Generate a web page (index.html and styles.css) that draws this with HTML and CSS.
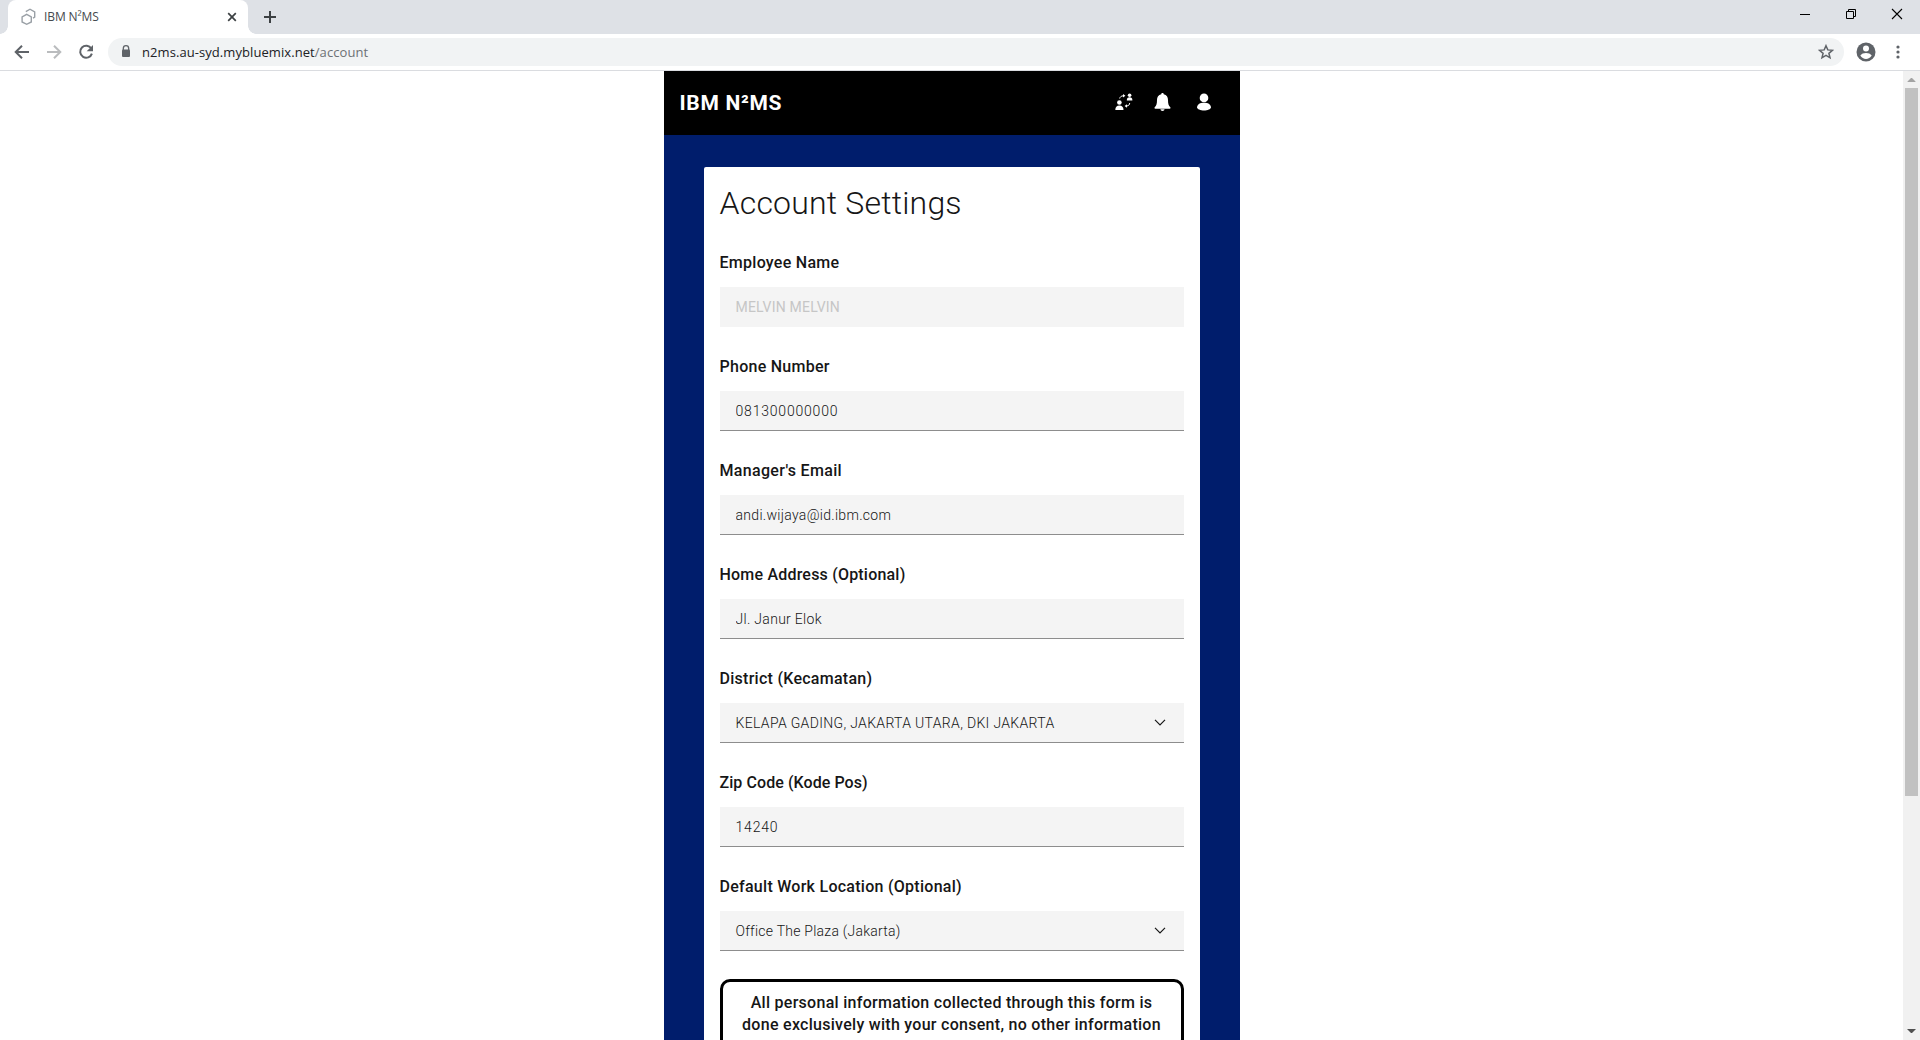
FILE: index.html
```html
<!DOCTYPE html>
<html lang="en">
<head>
<meta charset="utf-8">
<title>IBM N²MS</title>
<link rel="stylesheet" href="styles.css">
</head>
<body>
<div class="tabstrip">
  <div class="tab">
    <svg class="tab-icon" width="16" height="18" viewBox="0 0 16 18" fill="none" stroke="#9aa0a6" stroke-width="1.4"><path d="M5.7 6.3l4.6 2.7v5L5.7 16.3 1.1 14V9z"/><path d="M4.8 3.6l4.2-2.4 4.7 2.7v5.2l-1.7 1"/></svg>
    <span class="tab-title">IBM N²MS</span>
    <svg class="tab-close" width="10" height="10" viewBox="0 0 10 10" stroke="#3c4043" stroke-width="1.7"><path d="M1.2 1.2l7.6 7.6M8.8 1.2L1.2 8.8"/></svg>
  </div>
  <svg class="new-tab" width="12" height="12" viewBox="0 0 12 12" stroke="#3c4043" stroke-width="2"><path d="M6 0v12M0 6h12"/></svg>
  <div class="window-controls">
    <svg width="12" height="12" viewBox="0 0 12 12" stroke="#000"><path d="M1 6.5h10"/></svg>
    <svg width="12" height="12" viewBox="0 0 12 12" fill="none" stroke="#000"><path d="M1.5 3.5h7v7h-7zM3.5 3V1.5h7v7H9"/></svg>
    <svg width="12" height="12" viewBox="0 0 12 12" stroke="#000" stroke-width="1.1"><path d="M1 1l10 10M11 1L1 11"/></svg>
  </div>
</div>
<div class="toolbar">
  <svg class="nav" width="16" height="16" viewBox="0 0 16 16" fill="none" stroke="#5f6368" stroke-width="2"><path d="M15 8H2.5M8 1.7L1.7 8 8 14.3"/></svg>
  <svg class="nav" width="16" height="16" viewBox="0 0 16 16" fill="none" stroke="#babcbe" stroke-width="2"><path d="M1 8h12.5M8 1.7L14.3 8 8 14.3"/></svg>
  <svg class="nav" width="16" height="16" viewBox="0 0 16 16"><path d="M13.3 4.6A6 6 0 1 0 13.9 9.6" fill="none" stroke="#5f6368" stroke-width="2"/><path d="M15 1v6.3H8.7z" fill="#5f6368"/></svg>
  <div class="omnibox">
    <svg width="10" height="13" viewBox="0 0 10 13"><path d="M2.3 5V3.4a2.7 2.7 0 0 1 5.4 0V5" fill="none" stroke="#5f6368" stroke-width="1.3"/><rect x="1" y="4.5" width="8" height="7.5" rx="1" fill="#5f6368"/></svg>
    <span class="url">n2ms.au-syd.mybluemix.net<span class="path">/account</span></span>
    <svg class="star" width="16" height="16" viewBox="0 0 16 16" fill="none" stroke="#5f6368" stroke-width="1.5"><path d="M8 1.7l1.8 4.2 4.7.4-3.6 3 1.1 4.5L8 11.4l-4 2.4 1.1-4.5-3.6-3 4.7-.4z"/></svg>
  </div>
  <svg class="profile" width="20" height="20" viewBox="0 0 20 20"><circle cx="10" cy="10" r="9.5" fill="#5f6368"/><circle cx="10" cy="6.6" r="3" fill="#fff"/><path d="M4.3 13.6c1.2-1.9 3.3-2.6 5.7-2.6s4.5.7 5.7 2.6C14.3 15.7 12.3 17 10 17s-4.3-1.3-5.7-3.4z" fill="#fff"/></svg>
  <svg class="more" width="4" height="14" viewBox="0 0 4 14" fill="#5f6368"><circle cx="2" cy="2" r="1.6"/><circle cx="2" cy="7" r="1.6"/><circle cx="2" cy="12" r="1.6"/></svg>
</div>
<div class="viewport">
  <main class="app">
    <header class="app-header">
      <h1 class="brand">IBM N²MS</h1>
      <svg class="swap" width="18" height="18" viewBox="0 0 18 18" fill="#fff"><circle cx="4.4" cy="9.5" r="2.3"/><path d="M.3 17c0-2.900 1.400-4.500 4.100-4.500s4.100 1.600 4.100 4.500z"/><circle cx="14.600" cy="2.300" r="1.800"/><path d="M11.800 7.500c0-2.100.9-3.200 2.800-3.200s2.800 1.100 2.800 3.200z"/><path d="M4.700 5.500c.3-1.700 1.600-2.600 3.500-2.700M14.700 10c-.1 1.700-1 2.700-2.800 3" fill="none" stroke="#fff"/><path d="M8 1.100l2.400 1.700L8 4.500zM12 11.300L9.600 13l2.400 1.700z"/></svg>
      <svg class="bell" width="17" height="18" viewBox="0 0 17 18" fill="#fff"><path d="M8.500 0c.8 0 1.200.5 1.200 1.300C12.700 2 14 4.200 14 7c0 4 .6 5.700 2.300 7.300.5.600.2 1.500-.6 1.500H1.300c-.8 0-1.100-.9-.6-1.500C2.400 12.700 3 11 3 7c0-2.800 1.300-5 4.300-5.700C7.300.5 7.700 0 8.500 0zM6.500 16.300h4c0 1-.8 1.700-2 1.700s-2-.7-2-1.700z"/></svg>
      <svg class="user" width="14" height="18" viewBox="0 0 14 18" fill="#fff"><circle cx="7" cy="4.900" r="4.300"/><path d="M0 14.300C.5 11 3 9.700 7 9.700s6.500 1.300 7 4.600c0 2-3.500 3.200-7 3.200s-7-1.200-7-3.200z"/></svg>
    </header>
    <form class="card">
      <h2 class="title">Account Settings</h2>
      <div class="field">
        <label for="name">Employee Name</label>
        <input id="name" class="control" value="MELVIN MELVIN" disabled>
      </div>
      <div class="field">
        <label for="phone">Phone Number</label>
        <input id="phone" class="control numeric" value="081300000000">
      </div>
      <div class="field">
        <label class="manager" for="manager">Manager's Email</label>
        <input id="manager" class="control" value="andi.wijaya@id.ibm.com">
      </div>
      <div class="field">
        <label class="snug" for="address">Home Address (Optional)</label>
        <input id="address" class="control" value="Jl. Janur Elok">
      </div>
      <div class="field">
        <label for="district">District (Kecamatan)</label>
        <div class="control select" id="district">KELAPA GADING, JAKARTA UTARA, DKI JAKARTA
          <svg width="12" height="7" viewBox="0 0 12 7" fill="none" stroke="#161616" stroke-width="1.200"><path d="M1 .800L6 5.800 11 .800"/></svg></div>
      </div>
      <div class="field">
        <label class="tight" for="zip">Zip Code (Kode Pos)</label>
        <input id="zip" class="control numeric" value="14240">
      </div>
      <div class="field">
        <label for="location">Default Work Location (Optional)</label>
        <div class="control select office" id="location">Office The Plaza (Jakarta)
          <svg width="12" height="7" viewBox="0 0 12 7" fill="none" stroke="#161616" stroke-width="1.200"><path d="M1 .800L6 5.800 11 .800"/></svg></div>
      </div>
      <p class="consent">All personal information collected through this form is<br>done exclusively with your consent, no other information</p>
    </form>
  </main>
  <div class="scrollbar">
    <svg width="17" height="17" viewBox="0 0 17 17" fill="#a3a3a3"><path d="M8 7h1l3.500 3.500V11h-8v-.5z"/></svg>
    <div class="thumb"></div>
    <svg class="down" width="17" height="17" viewBox="0 0 17 17" fill="#505050"><path d="M4.500 6v.5L8 10h1l3.500-3.500V6z"/></svg>
  </div>
</div>
</body>
</html>
```
FILE: styles.css
```css
* { box-sizing: border-box; }

body {
  margin: 0;
  height: 1040px;
  overflow: hidden;
  display: flex;
  flex-direction: column;
  background: #fff;
  color: #161616;
  font-family: Roboto, sans-serif;
}

svg { display: block; flex: none; }

/* Browser chrome */
.tabstrip {
  flex: none;
  display: flex;
  height: 34px;
  padding-left: 8px;
  background: #dee1e6;
  font-family: "Open Sans", sans-serif;
}

.tab {
  position: relative;
  display: flex;
  align-items: center;
  width: 240px;
  padding: 0 11px 0 13px;
  background: #fff;
  border-radius: 8px 8px 0 0;
}

.tab::before,
.tab::after {
  content: "";
  position: absolute;
  bottom: 0;
  width: 8px;
  height: 8px;
}

.tab::before { left: -8px; background: radial-gradient(circle at 0 0, #dee1e6 7.5px, #fff 8px); }
.tab::after { right: -8px; background: radial-gradient(circle at 100% 0, #dee1e6 7.5px, #fff 8px); }

.tab-title {
  margin: 0 auto 0 7px;
  padding-bottom: 1px;
  font-size: 12px;
  letter-spacing: -0.1px;
  color: #45494d;
}

.new-tab { margin: 11px 0 0 16px; }

.window-controls {
  display: flex;
  gap: 34px;
  margin: 8px 17px 0 auto;
}

.toolbar {
  flex: none;
  display: flex;
  align-items: center;
  height: 37px;
  padding: 0 19px 1px 14px;
  border-bottom: 1px solid #dadce0;
}

.nav { margin-right: 16px; }

.omnibox {
  flex: 1;
  display: flex;
  align-items: center;
  height: 28px;
  margin: 0 12px 0 -2px;
  padding: 0 10px 0 13px;
  border-radius: 14px;
  background: #f1f3f4;
}

.url {
  margin-left: 11px;
  font: 13px "Open Sans", sans-serif;
  letter-spacing: 0.07px;
  color: #202124;
}

.path { color: #6d7175; }
.star { margin-left: auto; }
.more { margin-left: 20px; margin-right: 1px; }

/* Page */
.viewport {
  flex: 1;
  min-height: 0;
  display: flex;
}

.app {
  width: 576px;
  margin: 0 auto;
  overflow: hidden;
  background: #001d6c;
}

.app-header {
  display: flex;
  align-items: center;
  height: 64px;
  padding: 0 29px 2px 16px;
  background: #000;
  color: #fff;
}

.brand {
  margin: 2px auto 0 0;
  font-size: 21px;
  line-height: 24px;
  font-weight: 700;
  letter-spacing: 0.7px;
}

.bell { margin-left: 21px; }
.user { margin-left: 26px; }

.card {
  width: 496px;
  margin: 32px auto 0;
  padding: 16px;
  border-radius: 2px;
  background: #fff;
}

.title {
  margin: 0 0 26px;
  font-size: 32px;
  line-height: 40px;
  font-weight: 300;
  letter-spacing: 0.2px;
}

.field { margin-bottom: 26px; }

.field label {
  display: block;
  margin-bottom: 11px;
  font-size: 16px;
  line-height: 27px;
  font-weight: 500;
  letter-spacing: 0.27px;
}

.field .snug { letter-spacing: 0.2px; }
.field .tight { letter-spacing: 0.07px; }
.field .manager { letter-spacing: 0.33px; }

.control {
  display: block;
  width: 100%;
  height: 40px;
  padding: 0 16px;
  border: 0;
  border-bottom: 1px solid #8d8d8d;
  border-radius: 0;
  background: #f4f4f4;
  color: #161616;
  font: 300 14px Roboto, sans-serif;
  letter-spacing: 0.3px;
}

.control:disabled {
  border-bottom-color: transparent;
  color: #c6c6c6;
  font-weight: 400;
  letter-spacing: 0.2px;
}

.numeric { letter-spacing: 0.8px; }

.select {
  display: flex;
  align-items: center;
  justify-content: space-between;
  padding-right: 18px;
  letter-spacing: 0.33px;
}

.office { letter-spacing: 0.24px; }

.consent {
  margin: 28px 0 0;
  padding: 10px 8px;
  border: 3px solid #000;
  border-radius: 10px;
  text-align: center;
  font-size: 16px;
  line-height: 22px;
  font-weight: 500;
  letter-spacing: 0.28px;
}

/* Scrollbar */
.scrollbar {
  width: 17px;
  display: flex;
  flex-direction: column;
  align-items: center;
  background: #f1f1f1;
}

.thumb {
  width: 13px;
  height: 708px;
  background: #c1c1c1;
}

.down { margin-top: auto; }
```
